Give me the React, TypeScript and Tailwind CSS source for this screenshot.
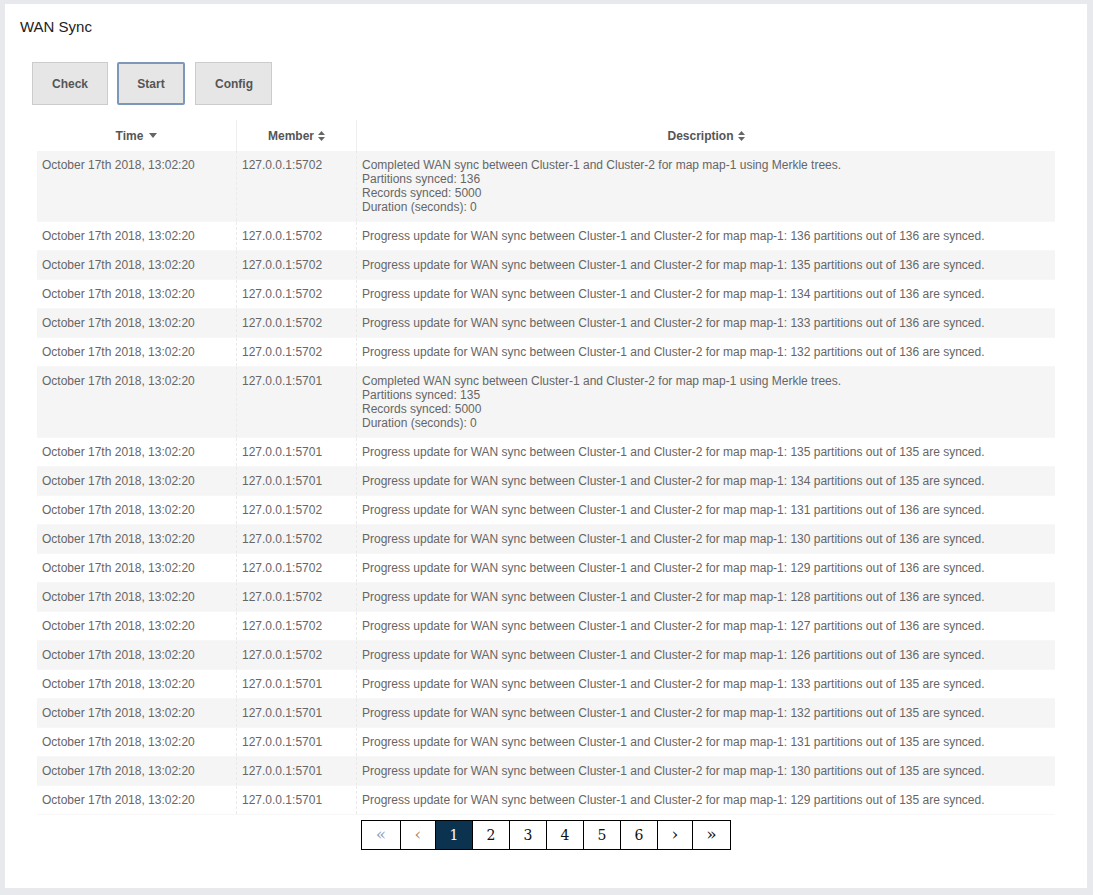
import React from "react";

type Row = { member: string; desc: string[] };

const progress = (done: number, total: number) =>
  `Progress update for WAN sync between Cluster-1 and Cluster-2 for map map-1: ${done} partitions out of ${total} are synced.`;

const completed = (total: number) => [
  "Completed WAN sync between Cluster-1 and Cluster-2 for map map-1 using Merkle trees.",
  `Partitions synced: ${total}`,
  "Records synced: 5000",
  "Duration (seconds): 0",
];

const rows: Row[] = [
  { member: "127.0.0.1:5702", desc: completed(136) },
  { member: "127.0.0.1:5702", desc: [progress(136, 136)] },
  { member: "127.0.0.1:5702", desc: [progress(135, 136)] },
  { member: "127.0.0.1:5702", desc: [progress(134, 136)] },
  { member: "127.0.0.1:5702", desc: [progress(133, 136)] },
  { member: "127.0.0.1:5702", desc: [progress(132, 136)] },
  { member: "127.0.0.1:5701", desc: completed(135) },
  { member: "127.0.0.1:5701", desc: [progress(135, 135)] },
  { member: "127.0.0.1:5701", desc: [progress(134, 135)] },
  { member: "127.0.0.1:5702", desc: [progress(131, 136)] },
  { member: "127.0.0.1:5702", desc: [progress(130, 136)] },
  { member: "127.0.0.1:5702", desc: [progress(129, 136)] },
  { member: "127.0.0.1:5702", desc: [progress(128, 136)] },
  { member: "127.0.0.1:5702", desc: [progress(127, 136)] },
  { member: "127.0.0.1:5702", desc: [progress(126, 136)] },
  { member: "127.0.0.1:5701", desc: [progress(133, 135)] },
  { member: "127.0.0.1:5701", desc: [progress(132, 135)] },
  { member: "127.0.0.1:5701", desc: [progress(131, 135)] },
  { member: "127.0.0.1:5701", desc: [progress(130, 135)] },
  { member: "127.0.0.1:5701", desc: [progress(129, 135)] },
];

function SortBoth() {
  return (
    <svg width="7" height="10" viewBox="0 0 7 10" className="ml-1 inline-block">
      <path d="M3.5 0 L7 4 H0 Z" fill="#666" />
      <path d="M3.5 10 L7 6 H0 Z" fill="#666" />
    </svg>
  );
}

function SortDown() {
  return (
    <svg width="8" height="5" viewBox="0 0 8 5" className="ml-1.5 inline-block">
      <path d="M0 0 H8 L4 5 Z" fill="#666" />
    </svg>
  );
}

export default function App() {
  const pages = ["«", "‹", "1", "2", "3", "4", "5", "6", "›", "»"];
  const widths = ["w-[38px]", "w-[35px]", "w-[37px]", "w-[37px]", "w-[37px]", "w-[37px]", "w-[37px]", "w-[37px]", "w-[35px]", "w-[38px]"];

  return (
    <div className="h-[895px] w-[1093px] bg-[#e8e9ed] pl-[5px] pt-[4px] pr-[6px] pb-[7px] font-['Liberation_Sans',Arial,sans-serif]">
      <div className="flex h-full flex-col bg-white">
        <div className="pl-[15px] pt-[14px] text-[15px] leading-[18px] text-[#222]">WAN Sync</div>

        {/* actions */}
        <div className="mt-[26px] flex gap-[9px] pl-[27px]">
          <button className="h-[43px] w-[76px] border border-[#ccc] bg-[#e6e6e6] text-[12px] font-bold text-[#555]">Check</button>
          <button className="h-[43px] w-[68px] rounded-[2px] border-2 border-[#7d97b8] bg-[#e6e6e6] text-[12px] font-bold text-[#555]">Start</button>
          <button className="ml-px h-[43px] w-[77px] border border-[#ccc] bg-[#e6e6e6] pl-px text-[12px] font-bold text-[#555]">Config</button>
        </div>

        {/* table */}
        <div className="ml-[32px] mt-[15px] w-[1018px] text-[12px] leading-[14px]">
          <div className="flex h-[31px] items-center font-bold text-[#555]">
            <div className="flex h-full w-[200px] items-center justify-center border-r border-[#eee]">
              Time
              <SortDown />
            </div>
            <div className="flex h-full w-[120px] items-center justify-center border-r border-[#eee]">
              Member
              <SortBoth />
            </div>
            <div className="flex h-full flex-1 items-center justify-center">
              Description
              <SortBoth />
            </div>
          </div>

          {rows.map((r, i) => (
            <div
              key={i}
              className={`flex border-b border-[#f7f7f7] text-[#666] ${i % 2 === 0 ? "bg-[#f5f5f5]" : "bg-white"}`}
            >
              <div className="w-[200px] border-r border-dashed border-[#eaeaea] px-[5px] py-[7px]">
                October 17th 2018, 13:02:20
              </div>
              <div className="w-[120px] border-r border-dashed border-[#eaeaea] px-[5px] py-[7px]">{r.member}</div>
              <div className="flex-1 px-[5px] py-[7px]">
                {r.desc.map((d, j) => (
                  <div key={j}>{d}</div>
                ))}
              </div>
            </div>
          ))}
        </div>

        {/* pagination */}
        <div className="mt-[5px] flex justify-center">
          <div className="flex border border-black font-['DejaVu_Serif',serif] text-[14px]">
            {pages.map((p, i) => (
              <div
                key={i}
                className={`flex h-[28px] items-center justify-center ${widths[i]} ${i > 0 ? "border-l border-black" : ""} ${
                  i === 0 || i === 1 || i > 7 ? "text-[17px]" : ""
                } ${
                  p === "1"
                    ? "bg-[#0b3350] text-white"
                    : i === 0
                    ? "text-[#8ea3bd]"
                    : i === 1
                    ? "text-[#b4876a]"
                    : "text-[#111]"
                }`}
              >
                {p}
              </div>
            ))}
          </div>
        </div>
      </div>
    </div>
  );
}
